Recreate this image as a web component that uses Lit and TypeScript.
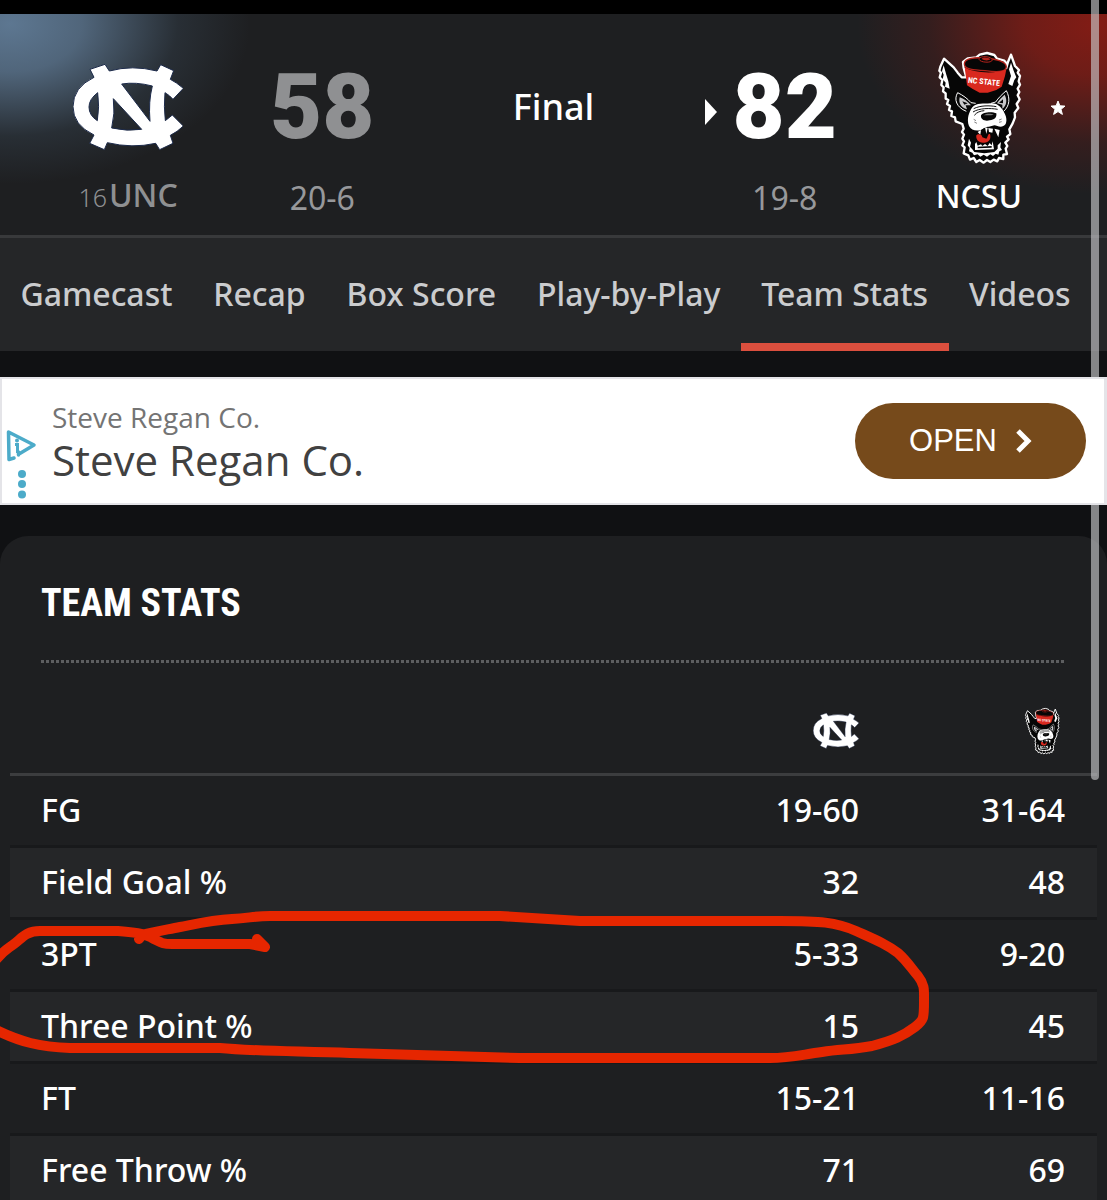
import { LitElement, html, css, svg } from "lit";
import { customElement, property } from "lit/decorators.js";
import { classMap } from "lit/directives/class-map.js";

interface StatRow {
  label: string;
  away: string;
  home: string;
}

const TABS = ["Gamecast", "Recap", "Box Score", "Play-by-Play", "Team Stats", "Videos"];

const STATS: StatRow[] = [
  { label: "FG", away: "19-60", home: "31-64" },
  { label: "Field Goal %", away: "32", home: "48" },
  { label: "3PT", away: "5-33", home: "9-20" },
  { label: "Three Point %", away: "15", home: "45" },
  { label: "FT", away: "15-21", home: "11-16" },
  { label: "Free Throw %", away: "71", home: "69" },
];

const uncArt = svg`
  <path fill="#fff" stroke="#1c2a4a" stroke-width="3" fill-rule="evenodd"
    d="M273 208 L318 193 L331 213 Q400 194 474 213 L485 194 L524 212 L514 238 Q532 247 553 265
       L522 298 Q512 286 498 278 Q494 320 499 362 L520 345 L553 378 Q535 396 514 406 L522 430
       L482 449 L470 430 Q400 446 325 428 L316 449 L272 430 L285 405 Q222 375 222 320
       Q222 262 285 232 Z
       M296 278 Q270 298 270 321 Q270 346 295 362 Q302 320 296 278 Z
       M368 252 Q410 245 460 258 Q448 305 453 364 Z
       M343 296 L428 388 Q385 395 338 384 Q349 340 343 296 Z" />
`;

const wolfArt = svg`
  <path fill="#060606" stroke="#fff" stroke-width="7" stroke-linejoin="round"
    d="M75 56 L64 80 L61 92 L66 98 L62 112 L70 120 L67 135 L74 142 L72 154 L80 160 L80 176 L88 180
       L84 192 L93 198 L90 210 L99 214 L97 228 L108 232 L110 244 L130 252 L134 266 L129 276 L135 284
       L130 296 L135 304 L130 316 L137 322 L134 340 L148 346 L153 359 L164 354 L172 366 L182 360
       L194 368 L204 360 L214 366 L224 359 L235 364 L240 354 L253 357 L253 344 L264 342 L260 326
       L265 318 L259 308 L269 298 L264 290 L274 282 L271 268 L281 250 L288 232 L287 218 L298 204
       L293 192 L302 178 L296 166 L301 156 L296 146 L303 134 L299 124 L303 108 L296 98 L300 90
       L288 78 L276 44 L267 66 L262 84 L264 72 L256 62 L234 56 L226 45 L204 39 L182 44 L172 52
       L146 55 L132 66 L134 84 L142 112 L128 112 L116 98 L104 82 Z" />
  <path fill="#fff" d="M74 76 L69 94 L74 104 L71 118 L80 128 L78 140 L92 146 L88 124 L82 104 Z" />
  <path fill="#fff" d="M276 68 L270 88 L276 108 L268 132 L280 138 L286 120 L292 112 L284 92 Z" />
  <path fill="#060606" stroke="#b3231b" stroke-width="4"
    d="M136 72 C136 54 168 52 196 54 C228 56 262 64 262 80 C262 98 230 96 198 92 C166 90 136 88 136 72 Z" />
  <path fill="#060606" stroke="#b3231b" stroke-width="3"
    d="M180 58 C180 46 218 48 220 60 C218 70 184 68 180 58 Z" />
  <path fill="#b3231b" d="M188 56 C192 50 210 52 214 58 C208 63 194 62 188 56 Z" />
  <path fill="#d9291f"
    d="M137 82 C160 98 228 104 262 88 L258 108 L248 140 L232 150 L206 158 L182 158 L160 146 L144 136 Z" />
  <text class="cap" x="146" y="128" transform="rotate(6 146 128)">NC STATE</text>
  <path fill="none" stroke="#fff" stroke-width="3"
    d="M116 158 C104 178 112 202 142 214 M116 158 C132 166 146 176 156 188 L170 190
       M262 152 C274 174 272 198 254 214 M262 152 C248 164 238 174 230 186 L216 190" />
  <path fill="#c9c9cb" d="M122 172 C118 190 126 202 144 208 L140 196 L156 196 C146 184 134 176 122 172 Z" />
  <path fill="#c9c9cb" d="M257 164 C266 182 262 198 250 206 L250 194 L234 190 C240 180 248 172 257 164 Z" />
  <path fill="#060606" d="M130 184 L146 190 L136 194 Z M252 178 L240 188 L252 190 Z" />
  <path fill="#fff"
    d="M160 202 C172 188 194 192 214 190 C232 188 242 198 250 208 C260 224 266 238 260 252
       C250 266 236 258 226 256 L196 264 C182 276 158 274 150 258 C142 238 150 216 160 202 Z" />
  <path fill="none" stroke="#111" stroke-width="3"
    d="M164 206 C184 196 212 196 232 200 M162 216 C180 204 214 204 236 208 M166 226 C174 216 184 213 196 212" />
  <path fill="#060606"
    d="M186 226 C190 216 220 214 232 220 C234 232 226 240 212 241 C200 245 184 240 186 226 Z" />
  <path fill="#777" d="M194 226 C200 220 216 220 224 224 C214 226 204 226 194 226 Z" />
  <path fill="none" stroke="#444" stroke-width="2"
    d="M164 238 l7 4 M166 246 l8 4 M240 240 l8 -3 M240 247 l8 -2" />
  <path fill="#060606"
    d="M166 278 C182 278 190 264 206 260 L240 266 L246 284 L232 290 L226 318 L168 322 L164 300 Z" />
  <path fill="#fff" d="M198 262 L206 264 L202 282 Z M208 264 L222 266 L220 278 L210 276 Z M226 266 L242 270 L238 292 Z M176 276 L186 270 L184 284 Z" />
  <path fill="#d9291f"
    d="M172 286 C176 280 190 282 190 292 L202 296 C208 288 206 280 213 282 C218 298 208 310 192 308 C178 308 170 298 172 286 Z" />
  <path fill="#fff"
    d="M168 312 L172 306 L176 317 L186 313 L190 318 L198 312 L206 318 L212 309 L218 316 L221 304 L225 328 L168 330 Z" />
  <path fill="#060606" d="M176 320 L218 318 L218 323 L176 325 Z" />
  <path fill="#fff"
    d="M150 296 L156 308 L153 320 L160 328 L166 336 L196 340 L226 336 L236 326 L236 316 L246 306
       L244 322 L249 330 L241 334 L238 344 L230 341 L222 348 L214 343 L204 350 L194 344
       L184 350 L176 343 L165 346 L160 338 L150 334 L152 324 L146 316 Z" />
`;

@customElement("team-logo")
export class TeamLogo extends LitElement {
  @property() team = "unc";

  static styles = css`
    :host {
      display: block;
    }
    .art {
      display: block;
      width: 100%;
      height: 100%;
    }
    .cap {
      font: bold 24px "Roboto Condensed", "Noto Sans CJK JP", sans-serif;
      fill: #fff;
    }
  `;

  render() {
    const unc = this.team === "unc";
    return html`<svg
      class="art"
      role="img"
      aria-label=${unc ? "UNC" : "NCSU"}
      viewBox=${unc ? "222 120 330 405" : "15 0 330 405"}
    >
      ${unc ? uncArt : wolfArt}
    </svg>`;
  }
}

@customElement("app-root")
export class AppRoot extends LitElement {
  static styles = css`
    :host {
      display: block;
      color: #fff;
      font-family: "Noto Sans", "Open Sans", sans-serif;
    }
    * {
      box-sizing: border-box;
    }
    .screen {
      position: relative;
      height: 100vh;
      overflow-x: hidden;
      overflow-y: auto;
      scrollbar-width: none;
      background: #101113;
    }
    .status {
      height: 14px;
      background: #000;
    }
    .thumb {
      position: absolute;
      top: 0;
      right: 8px;
      width: 8px;
      height: 780px;
      border-radius: 0 0 4px 4px;
      background: rgba(200, 200, 204, 0.64);
    }

    .game {
      display: grid;
      grid-template-columns: 194fr 194fr 268fr 194fr 194fr;
      height: 224px;
      padding: 26px 31px 0;
      border-bottom: 3px solid #38393b;
      background:
        radial-gradient(ellipse 240px 160px at 10px 10px, #5d7791 0%, rgba(93, 119, 145, 0.8) 30%, rgba(70, 92, 112, 0.25) 70%, transparent 100%),
        radial-gradient(ellipse 240px 170px at calc(100% - 10px) 10px, #821c15 0%, rgba(130, 28, 21, 0.8) 30%, rgba(110, 26, 22, 0.28) 70%, transparent 100%),
        #1e1f21;
    }
    .side {
      display: grid;
      grid-template-columns: 1fr auto 1fr;
      grid-template-rows: 135px 42px;
      align-items: center;
      column-gap: 16px;
    }
    .side .big {
      width: 110px;
      height: 135px;
      grid-column: 2;
    }
    .name {
      grid-column: 1 / -1;
      grid-row: 2;
      display: flex;
      justify-content: center;
      align-items: baseline;
      gap: 2px;
      font: 500 32px/42px "Noto Sans", sans-serif;
    }
    .rank {
      font-size: 25px;
      font-weight: 300;
    }
    .loser {
      color: #8f9092;
    }
    .star {
      width: 16px;
      height: 16px;
    }
    .result {
      display: grid;
      grid-template-columns: 1fr auto 1fr;
      grid-template-rows: 135px 46px;
      align-items: center;
      column-gap: 16px;
    }
    .score {
      grid-column: 2;
      font: 900 90px/92px Roboto, sans-serif;
    }
    .arrow {
      width: 12px;
      height: 26px;
      margin-top: 8px;
      justify-self: end;
    }
    .record {
      grid-column: 1 / -1;
      grid-row: 2;
      text-align: center;
      color: #97989b;
      font: 400 32px/46px "Noto Sans", sans-serif;
    }
    .state {
      font: 500 36px/134px "Noto Sans", sans-serif;
      text-align: center;
    }

    .tabs {
      display: flex;
      height: 113px;
      padding-right: 16px;
      background: #252628;
    }
    .tab {
      flex: 1 1 auto;
      border-bottom: 8px solid transparent;
      color: #cbccce;
      font: 500 32px/112px "Noto Sans", sans-serif;
      text-align: center;
      text-decoration: none;
      white-space: nowrap;
    }
    .tab.on {
      border-bottom-color: #db4f3e;
    }

    .ad {
      position: relative;
      z-index: 1;
      display: flex;
      align-items: center;
      height: 128px;
      margin: 26px 0 31px;
      padding: 0 18px 0 3px;
      border: 2px solid #e4e4e8;
      border-right-width: 3px;
      background: #fff;
      font-family: "Open Sans", sans-serif;
    }
    .choices {
      width: 32px;
      height: 72px;
      margin: 49px 15px 0 0;
      align-self: flex-start;
    }
    .copy {
      flex: 1;
      color: #414141;
      font-size: 42px;
      line-height: 48px;
    }
    .brand {
      color: #747474;
      font-size: 28px;
      line-height: 38px;
    }
    .open {
      display: flex;
      align-items: center;
      justify-content: center;
      gap: 18px;
      width: 231px;
      height: 76px;
      border: 0;
      border-radius: 38px;
      background: #764a1b;
      color: #fff;
      font: 31px/36px "Liberation Sans", Arial, sans-serif;
    }
    .chev {
      width: 17px;
      height: 26px;
    }

    .card {
      position: relative;
      padding: 47px 10px 0;
      border-radius: 28px 28px 0 0;
      background: #1e1f21;
    }
    .title {
      margin: 0 31px;
      padding-bottom: 37px;
      font: bold 38px/40px "Roboto Condensed", "Noto Sans CJK JP", sans-serif;
    }
    .dots {
      height: 3px;
      margin: 0 31px;
      background: repeating-linear-gradient(90deg, #5d5e60 0 3px, transparent 3px 5px);
    }
    .stats {
      width: 100%;
      border-collapse: separate;
      border-spacing: 0;
      table-layout: fixed;
      font-size: 32px;
      line-height: 40px;
      font-weight: 500;
    }
    .num {
      width: 206px;
    }
    .stats th,
    .stats td {
      padding: 0 32px 2px 31px;
      text-align: right;
      font-weight: 500;
    }
    .stats .label {
      text-align: left;
    }
    .stats thead th {
      height: 113px;
      padding-top: 40px;
      border-bottom: 3px solid #3c3d3f;
      vertical-align: top;
    }
    .small {
      width: 46px;
      height: 56px;
      margin: 0 0 0 auto;
    }
    .stats tbody th,
    .stats tbody td {
      height: 72px;
      border-bottom: 3px solid #18191b;
    }
    .stats tbody tr:nth-child(even) {
      background: #252628;
    }
    .mark {
      position: absolute;
      left: 0;
      top: 364px;
      width: 100%;
      pointer-events: none;
    }
  `;

  render() {
    return html`
      <div class="screen">
        <div class="status"></div>
        <header class="game">
          <div class="side loser">
            <team-logo class="big" team="unc"></team-logo>
            <div class="name"><span class="rank">16</span><span>UNC</span></div>
          </div>
          <div class="result">
            <div class="score loser">58</div>
            <div class="record">20-6</div>
          </div>
          <div class="state">Final</div>
          <div class="result">
            <svg class="arrow" viewBox="0 0 12 26" aria-hidden="true">
              <path d="M0 0 L12 13 L0 26 Z" fill="#fff" />
            </svg>
            <div class="score">82</div>
            <div class="record">19-8</div>
          </div>
          <div class="side">
            <team-logo class="big" team="ncsu"></team-logo>
            <svg class="star" viewBox="0 0 16 16" aria-hidden="true">
              <path
                fill="#fff"
                stroke="#fff"
                stroke-linejoin="round"
                d="M8 1 L9.9 5.8 L15 6.1 L11 9.3 L12.4 14.4 L8 11.6 L3.6 14.4 L5 9.3 L1 6.1 L6.1 5.8 Z"
              />
            </svg>
            <div class="name">NCSU</div>
          </div>
        </header>

        <nav class="tabs">
          ${TABS.map(
            (t) => html`<a
              href="#"
              class=${classMap({ tab: true, on: t === "Team Stats" })}
              >${t}</a
            >`
          )}
        </nav>

        <aside class="ad">
          <svg class="choices" viewBox="0 0 32 72" fill="none" aria-hidden="true">
            <path
              d="M9 30 L4 31.500 L3.500 4 L29 17 L14 26 M13.500 24 V27"
              stroke="#4cabc9"
              stroke-width="3.500"
              stroke-linejoin="round"
              stroke-linecap="round"
            />
            <path d="M10 16.500 H12.500 V25" stroke="#4cabc9" stroke-width="3" />
            <circle cx="12" cy="12.500" r="2" fill="#4cabc9" />
            <g fill="#4cabc9">
              <circle cx="17" cy="46" r="4" />
              <circle cx="17" cy="56" r="4" />
              <circle cx="17" cy="66.500" r="4" />
            </g>
          </svg>
          <div class="copy">
            <div class="brand">Steve Regan Co.</div>
            <div>Steve Regan Co.</div>
          </div>
          <button class="open" type="button">
            OPEN
            <svg class="chev" viewBox="0 0 17 26" fill="none" aria-hidden="true">
              <path d="M3 3 L13 13 L3 23" stroke="#fff" stroke-width="5" />
            </svg>
          </button>
        </aside>

        <section class="card">
          <h2 class="title">TEAM STATS</h2>
          <div class="dots"></div>
          <table class="stats">
            <thead>
              <tr>
                <th class="label"></th>
                <th class="num" scope="col"><team-logo class="small" team="unc"></team-logo></th>
                <th class="num" scope="col"><team-logo class="small" team="ncsu"></team-logo></th>
              </tr>
            </thead>
            <tbody>
              ${STATS.map(
                (s) => html`<tr>
                  <th class="label" scope="row">${s.label}</th>
                  <td>${s.away}</td>
                  <td>${s.home}</td>
                </tr>`
              )}
            </tbody>
          </table>
          <svg class="mark" viewBox="0 900 1107 170" aria-hidden="true">
            <path
              fill="none"
              stroke="#e62600"
              stroke-width="10"
              stroke-linecap="round"
              stroke-linejoin="round"
              d="M139 939 L142 935 C152 932 165 930 180 927 C200 923 212 920 232 919 C250 918 254 916 270 916
                 L500 916 L580 921 L780 921 C820 921 836 922 856 931 C876 940 886 944 898 953
                 C908 962 911 968 918 976 C925 985 924 990 924 1002 C924 1018 924 1020 915 1027
                 C903 1036 894 1040 872 1046 C850 1050 842 1049 822 1052 C800 1055 790 1058 770 1058
                 L520 1058 C440 1056 390 1054 350 1053 C290 1051 250 1051 220 1048 L70 1048
                 C40 1047 20 1042 -6 1029 M-6 962 C4 950 6 950 14 944 C22 938 26 931 40 931
                 L118 931 C146 933 148 936 152 938 C162 943 162 944 172 944 L250 944 L265 947 L257 939"
            />
          </svg>
        </section>
        <div class="thumb"></div>
      </div>
    `;
  }
}
